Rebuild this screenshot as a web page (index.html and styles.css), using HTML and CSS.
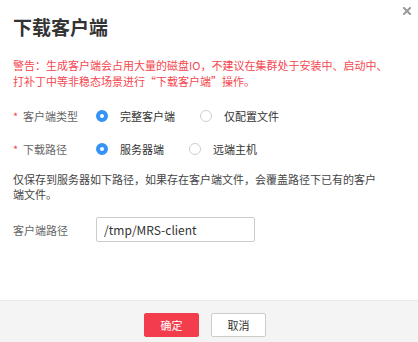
FILE: index.html
```html
<!DOCTYPE html>
<html lang="zh-CN">
<head>
<meta charset="utf-8">
<title>下载客户端</title>
<link rel="stylesheet" href="styles.css">
</head>
<body>
<div class="dialog">
  <div class="dialog-header">
    <h1 class="dialog-title">下载客户端</h1>
    <button class="dialog-close" aria-label="关闭">
      <svg width="8" height="8" viewBox="0 0 8 8"><path d="M1 1L7 7M7 1L1 7" stroke="#9a9a9a" stroke-width="2" stroke-linecap="square"/></svg>
    </button>
  </div>
  <div class="dialog-body">
    <p class="warning">警告：生成客户端会占用大量的磁盘IO，不建议在集群处于安装中、启动中、<br>打补丁中等非稳态场景进行“下载客户端”操作。</p>
    <div class="form-row">
      <label class="form-label"><span class="required">*</span>客户端类型</label>
      <div class="radio-group">
        <span class="radio-option"><span class="radio checked"></span>完整客户端</span>
        <span class="radio-option"><span class="radio"></span>仅配置文件</span>
      </div>
    </div>
    <div class="form-row row-second">
      <label class="form-label"><span class="required">*</span>下载路径</label>
      <div class="radio-group">
        <span class="radio-option"><span class="radio checked"></span>服务器端</span>
        <span class="radio-option"><span class="radio"></span>远端主机</span>
      </div>
    </div>
    <p class="description">仅保存到服务器如下路径，如果存在客户端文件，会覆盖路径下已有的客户<br>端文件。</p>
    <div class="form-row row-input">
      <label class="form-label">客户端路径</label>
      <input class="text-input" type="text" value="/tmp/MRS-client">
    </div>
  </div>
  <div class="dialog-footer">
    <button class="btn btn-primary">确定</button>
    <button class="btn btn-default">取消</button>
  </div>
</div>
</body>
</html>
```
FILE: styles.css
```css
html, body {
  margin: 0;
  padding: 0;
  background: #ffffff;
}

body {
  font-family: "Noto Sans CJK SC", "Noto Sans", sans-serif;
  font-size: 11px;
  color: #333333;
}

.dialog {
  width: 418px;
  height: 342px;
  display: flex;
  flex-direction: column;
  background: #ffffff;
  box-sizing: border-box;
}

.dialog-header {
  display: flex;
  justify-content: space-between;
  align-items: flex-start;
  padding: 15px 7px 0 13px;
}

.dialog-title {
  margin: 0;
  font-size: 19px;
  line-height: 24px;
  font-weight: bold;
  color: #333333;
}

.dialog-close {
  border: 0;
  background: transparent;
  padding: 0;
  margin-top: -8px;
  width: 8px;
  height: 8px;
  display: flex;
  cursor: pointer;
}

.dialog-body {
  padding: 0 12px 0 13px;
}

.warning {
  margin: 18px 0 0 0;
  color: #f5474f;
  line-height: 16px;
}

.form-row {
  display: flex;
  align-items: center;
  height: 24px;
  margin-top: 15px;
}

.row-second {
  margin-top: 9px;
}

.form-label {
  width: 83px;
  flex: none;
  color: #666666;
  display: flex;
  align-items: center;
}

.required {
  color: #f5474f;
  width: 10px;
  display: inline-block;
  font-size: 11px;
}

.radio-group {
  display: flex;
  align-items: center;
}

.radio-option {
  display: flex;
  align-items: center;
  margin-right: 25px;
  color: #333333;
}

.radio {
  width: 12px;
  height: 12px;
  box-sizing: border-box;
  border-radius: 50%;
  border: 1px solid #cfcfcf;
  background: #ffffff;
  margin-right: 12px;
}

.radio.checked {
  border: 4px solid #3592f6;
}

.description {
  margin: 11px 0 0 0;
  line-height: 15px;
  color: #444444;
}

.row-input {
  height: 25px;
  margin-top: 15px;
}

.text-input {
  width: 159px;
  height: 25px;
  box-sizing: border-box;
  border: 1px solid #cccccc;
  border-radius: 2px;
  padding: 0 7px;
  font-family: "Noto Sans CJK SC", "Noto Sans", sans-serif;
  font-size: 12px;
  color: #333333;
  outline: none;
}

.dialog-footer {
  margin-top: auto;
  height: 42px;
  box-sizing: border-box;
  background: #f4f4f4;
  border-top: 1px solid #e9e9e9;
  display: flex;
  justify-content: center;
  align-items: flex-start;
  gap: 12px;
  padding: 12px 8px 0 0;
}

.btn {
  width: 55px;
  height: 24px;
  box-sizing: border-box;
  border-radius: 2px;
  font-family: "Noto Sans CJK SC", "Noto Sans", sans-serif;
  font-size: 11px;
  padding: 0;
  cursor: pointer;
}

.btn-primary {
  background: #f33d4c;
  border: 1px solid #f33d4c;
  color: #ffffff;
}

.btn-default {
  background: #ffffff;
  border: 1px solid #cccccc;
  color: #333333;
}
```
